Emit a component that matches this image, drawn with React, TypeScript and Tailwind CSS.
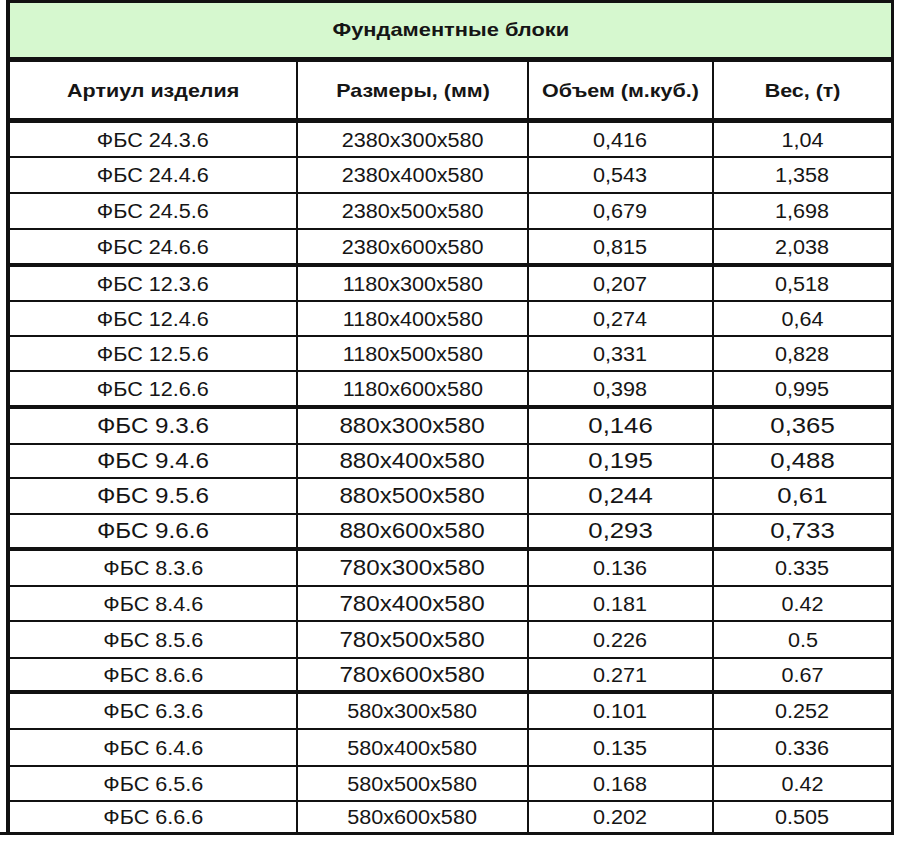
import React from "react";

type Row = { a: string; b: string; c: string; d: string; h: number };
type Group = { rows: Row[]; fa: string; fb: string; fc: string };

const g = (
  items: [string, string, string, string][],
  hs: number[],
  fa: string,
  fb: string,
  fc: string
): Group => ({
  rows: items.map((it, i) => ({ a: it[0], b: it[1], c: it[2], d: it[3], h: hs[i] })),
  fa,
  fb,
  fc,
});

const S20 = "text-[20px] scale-x-[1.08]";
const S22 = "text-[22px] scale-x-[1.1]";
const S22W = "text-[22px] scale-x-[1.17]";
const H = "font-bold text-[19px] scale-x-[1.13]";

const groups: Group[] = [
  g(
    [
      ["ФБС 24.3.6", "2380x300x580", "0,416", "1,04"],
      ["ФБС 24.4.6", "2380x400x580", "0,543", "1,358"],
      ["ФБС 24.5.6", "2380x500x580", "0,679", "1,698"],
      ["ФБС 24.6.6", "2380x600x580", "0,815", "2,038"],
    ],
    [33, 34, 34, 33],
    S20,
    S20,
    S20
  ),
  g(
    [
      ["ФБС 12.3.6", "1180x300x580", "0,207", "0,518"],
      ["ФБС 12.4.6", "1180x400x580", "0,274", "0,64"],
      ["ФБС 12.5.6", "1180x500x580", "0,331", "0,828"],
      ["ФБС 12.6.6", "1180x600x580", "0,398", "0,995"],
    ],
    [33, 33, 33, 33],
    S20,
    S20,
    S20
  ),
  g(
    [
      ["ФБС 9.3.6", "880x300x580", "0,146", "0,365"],
      ["ФБС 9.4.6", "880x400x580", "0,195", "0,488"],
      ["ФБС 9.5.6", "880x500x580", "0,244", "0,61"],
      ["ФБС 9.6.6", "880x600x580", "0,293", "0,733"],
    ],
    [34, 32, 34, 32],
    S22,
    S22,
    S22W
  ),
  g(
    [
      ["ФБС 8.3.6", "780x300x580", "0.136", "0.335"],
      ["ФБС 8.4.6", "780x400x580", "0.181", "0.42"],
      ["ФБС 8.5.6", "780x500x580", "0.226", "0.5"],
      ["ФБС 8.6.6", "780x600x580", "0.271", "0.67"],
    ],
    [34, 33, 35, 31],
    S20,
    S22,
    S20
  ),
  g(
    [
      ["ФБС 6.3.6", "580x300x580", "0.101", "0.252"],
      ["ФБС 6.4.6", "580x400x580", "0.135", "0.336"],
      ["ФБС 6.5.6", "580x500x580", "0.168", "0.42"],
      ["ФБС 6.6.6", "580x600x580", "0.202", "0.505"],
    ],
    [34, 35, 33, 30],
    S20,
    S20,
    S20
  ),
];

function Cell({ w, text, cls, last }: { w: string; text: string; cls: string; last?: boolean }) {
  return (
    <div
      className={`${w} h-full flex items-center justify-center ${last ? "" : "border-r-2 border-[#111]"}`}
    >
      <span className={`inline-block leading-none ${cls}`}>{text}</span>
    </div>
  );
}

export default function App() {
  return (
    <div
      className="w-[901px] h-[842px] bg-white text-[#151515]"
      style={{ fontFamily: '"Liberation Sans", Arial, sans-serif' }}
    >
      <div className="ml-[6px] w-[888px] border-t-[3px] border-l-4 border-r-[3px] border-[#111]">
        <div className="h-[54px] bg-[#d6f8cf] flex items-center justify-center">
          <span className="inline-block font-bold text-[19px] scale-x-[1.15] leading-none mt-[-2px]">
            Фундаментные блоки
          </span>
        </div>
        <div className="h-[5px] bg-[#111]" />
        <div className="h-[56px] flex">
          <Cell w="w-[288px]" text="Артиул изделия" cls={H} />
          <Cell w="w-[231px]" text="Размеры, (мм)" cls={H} />
          <Cell w="w-[185px]" text="Объем (м.куб.)" cls={H} />
          <Cell w="w-[177px]" text="Вес, (т)" cls={H} last />
        </div>
        <div className="h-[5px] bg-[#111]" />
        {groups.map((grp, gi) => (
          <div key={gi}>
            {gi > 0 && <div className="h-[4px] bg-[#111]" />}
            {grp.rows.map((r, ri) => (
              <div
                key={ri}
                className={`flex box-content ${ri < grp.rows.length - 1 ? "border-b-2 border-[#111]" : ""}`}
                style={{ height: r.h }}
              >
                <Cell w="w-[288px]" text={r.a} cls={grp.fa} />
                <Cell w="w-[231px]" text={r.b} cls={grp.fb} />
                <Cell w="w-[185px]" text={r.c} cls={grp.fc} />
                <Cell w="w-[177px]" text={r.d} cls={grp.fc} last />
              </div>
            ))}
          </div>
        ))}
      </div>
      <div className="w-[894px] h-[3px] bg-[#111]" />
    </div>
  );
}
